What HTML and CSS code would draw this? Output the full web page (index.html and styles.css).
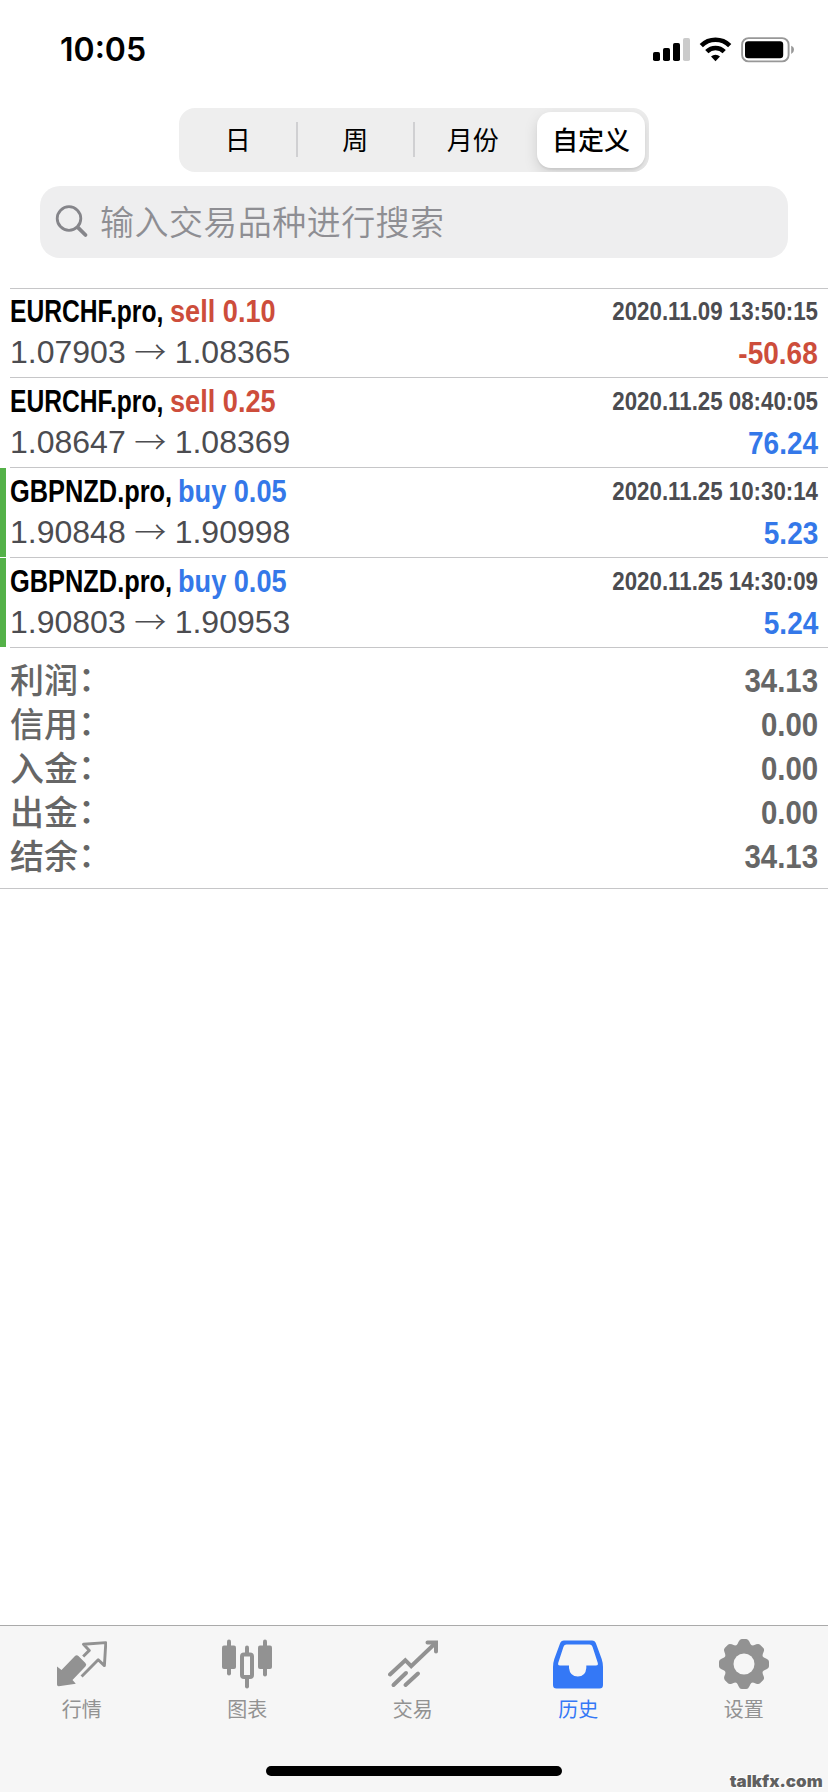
FILE: index.html
```html
<!DOCTYPE html>
<html lang="zh-CN">
<head>
<meta charset="utf-8">
<title>历史</title>
<link rel="stylesheet" href="styles.css">
</head>
<body>
<div class="screen">
  <header class="status">
    <span class="clock">10:05</span>
    <svg class="status-icons" width="142" height="26" viewBox="0 0 142 26">
      <rect x="0" y="15" width="7" height="9" rx="1.8"/>
      <rect x="10" y="11" width="7" height="13" rx="1.8"/>
      <rect x="20" y="6" width="7" height="18" rx="1.8"/>
      <rect x="30" y="1" width="7" height="23" rx="1.8" fill="#cbcbcb"/>
      <g fill="none" stroke="#000" stroke-width="4.6">
        <path d="M48.3 8.6a20.3 20.3 0 0 1 28.4 0"/>
        <path d="M53.8 14.6a12.4 12.4 0 0 1 17.4 0"/>
      </g>
      <path d="M58 19.6a6.500 6.500 0 0 1 9 0L62.500 24.200z"/>
      <rect x="89.100" y="1.100" width="46.500" height="23.300" rx="6.500" fill="none" stroke="#989898" stroke-width="1.900"/>
      <rect x="92" y="4.300" width="38.200" height="17" rx="3.200"/>
      <path d="M138.200 8.700q2.800 1.100 2.800 4.100t-2.800 4.100z" fill="#989898"/>
    </svg>
  </header>

  <nav class="segments">
    <span class="segment">日</span>
    <span class="segment divided">周</span>
    <span class="segment divided">月份</span>
    <span class="segment selected"><span class="pill">自定义</span></span>
  </nav>

  <div class="search">
    <svg width="34" height="34" viewBox="0 0 34 34" fill="none" stroke="#85858a" stroke-linecap="round">
      <circle cx="14" cy="14.500" r="11.800" stroke-width="2.800"/>
      <path d="M22.800 23.300L30.500 31" stroke-width="3.800"/>
    </svg>
    <span class="placeholder">输入交易品种进行搜索</span>
  </div>

  <main class="deals">
    <article class="deal">
      <div class="line top"><span class="symbol eurchf">EURCHF.pro,</span><span class="side sell">sell 0.10</span><time class="time">2020.11.09 13:50:15</time></div>
      <div class="line"><span class="price">1.07903</span><span class="arrow">→</span><span class="price">1.08365</span><span class="profit sell">-50.68</span></div>
    </article>
    <article class="deal">
      <div class="line top"><span class="symbol eurchf">EURCHF.pro,</span><span class="side sell">sell 0.25</span><time class="time">2020.11.25 08:40:05</time></div>
      <div class="line"><span class="price">1.08647</span><span class="arrow">→</span><span class="price">1.08369</span><span class="profit buy">76.24</span></div>
    </article>
    <article class="deal marked">
      <div class="line top"><span class="symbol gbpnzd">GBPNZD.pro,</span><span class="side buy">buy 0.05</span><time class="time">2020.11.25 10:30:14</time></div>
      <div class="line"><span class="price">1.90848</span><span class="arrow">→</span><span class="price">1.90998</span><span class="profit buy">5.23</span></div>
    </article>
    <article class="deal marked">
      <div class="line top"><span class="symbol gbpnzd">GBPNZD.pro,</span><span class="side buy">buy 0.05</span><time class="time">2020.11.25 14:30:09</time></div>
      <div class="line"><span class="price">1.90803</span><span class="arrow">→</span><span class="price">1.90953</span><span class="profit buy">5.24</span></div>
    </article>
  </main>

  <section class="totals">
    <div class="total"><span>利润<span class="colon">：</span></span><span class="amount">34.13</span></div>
    <div class="total"><span>信用<span class="colon">：</span></span><span class="amount">0.00</span></div>
    <div class="total"><span>入金<span class="colon">：</span></span><span class="amount">0.00</span></div>
    <div class="total"><span>出金<span class="colon">：</span></span><span class="amount">0.00</span></div>
    <div class="total"><span>结余<span class="colon">：</span></span><span class="amount">34.13</span></div>
  </section>

  <footer class="tabbar">
    <div class="tabs">
      <div class="tab">
        <svg width="50" height="50" viewBox="0 0 50 50" fill="#929292">
          <path d="M0 27.500L4.500 31 18 17q1.700-1.700 3.400 0l7 7q1.700 1.700 0 3.400L15.500 41l3.300 3.800-17 2.400Q0 47.300 0 45.500z"/>
          <path d="M26.200 17.500L32.300 11.400 26.500 5.300 48.800 3.600 47.400 26.600 41.200 20.700 24.600 37.500" fill="none" stroke="#929292" stroke-width="2.900" stroke-linejoin="round"/>
        </svg>
        <span>行情</span>
      </div>
      <div class="tab">
        <svg width="50" height="50" viewBox="0 0 50 50" fill="#929292">
          <rect x="0" y="6.500" width="14" height="23.500" rx="2"/>
          <rect x="5" y="0.500" width="4" height="36" rx="2"/>
          <rect x="36" y="6.500" width="14" height="23.500" rx="2"/>
          <rect x="41" y="0.500" width="4" height="37" rx="2"/>
          <rect x="20" y="15.500" width="10" height="22.500" rx="2" fill="none" stroke="#929292" stroke-width="4"/>
          <rect x="23" y="6.500" width="4" height="9" rx="2"/>
          <rect x="23" y="38" width="4" height="11.500" rx="2"/>
        </svg>
        <span>图表</span>
      </div>
      <div class="tab">
        <svg width="50" height="50" viewBox="0 0 50 50" fill="none" stroke="#929292" stroke-width="4" stroke-linecap="round">
          <path d="M2 35.500L17.300 21.200 23.200 27.200 47.500 4"/>
          <path d="M39.500 3.500H48V12.500M5.500 46L18 34M17.500 46L30 34.500"/>
        </svg>
        <span>交易</span>
      </div>
      <div class="tab active">
        <svg width="50" height="50" viewBox="0 0 50 50">
          <path fill="#3478f6" fill-rule="evenodd" d="M11 1.500H39Q42 1.500 43 4.500L48.700 20Q50 24 50 28V46Q50 49.500 46.500 49.500H3.500Q0 49.500 0 46V28Q0 24 1.300 20L7 4.500Q8 1.500 11 1.500ZM13.500 5.500Q11.300 5.500 10.500 7.800L5.200 24Q4.600 26.500 7 26.500H16V29Q17 37.500 24.800 37.500T33.300 29V26.500H43Q45.400 26.500 44.800 24L39.500 7.800Q38.700 5.500 36.500 5.500Z"/>
        </svg>
        <span>历史</span>
      </div>
      <div class="tab">
        <svg width="50" height="50" viewBox="-25 -25 50 50" fill="#929292">
          <defs><path id="tooth" d="M-8.200-18Q-6.300-19.500-5.300-22.500-4.200-25-2.300-25H2.300Q4.200-25 5.300-22.500 6.300-19.500 8.200-18L0 0z"/></defs>
          <circle r="19"/>
          <use href="#tooth"/><use href="#tooth" transform="rotate(45)"/><use href="#tooth" transform="rotate(90)"/><use href="#tooth" transform="rotate(135)"/>
          <use href="#tooth" transform="rotate(180)"/><use href="#tooth" transform="rotate(225)"/><use href="#tooth" transform="rotate(270)"/><use href="#tooth" transform="rotate(315)"/>
          <circle r="10.500" fill="#f6f6f6"/>
        </svg>
        <span>设置</span>
      </div>
    </div>
    <div class="home-indicator"></div>
    <span class="watermark">talkfx.com</span>
  </footer>
</div>
</body>
</html>
```

FILE: styles.css
```css
* { box-sizing: border-box; }

body {
  margin: 0;
  background: #fff;
  font-family: "Liberation Sans", "Noto Sans CJK SC", sans-serif;
}

.screen {
  display: flex;
  flex-direction: column;
  width: 828px;
  height: 1792px;
  overflow: hidden;
}

.status {
  display: flex;
  justify-content: space-between;
  height: 108px;
  padding: 30px 33px 0 60px;
}
.clock {
  font: 600 32px/40px Inter, sans-serif;
}
.status-icons { margin-top: 7px; }

.segments {
  display: grid;
  grid-template-columns: repeat(4, 1fr);
  align-self: center;
  width: 470px;
  height: 64px;
  border-radius: 16px;
  background: #eee;
  font: 400 26px/61px "Noto Sans CJK SC", sans-serif;
  text-align: center;
  overflow: hidden;
}
.segment { position: relative; }
.divided::before {
  content: "";
  position: absolute;
  left: -1px;
  top: 14px;
  width: 2px;
  height: 35px;
  background: #d0d0d2;
}
.selected { padding: 4px 4px 4px 5.500px; }
.pill {
  display: block;
  height: 56px;
  border-radius: 14px;
  background: #fff;
  box-shadow: 0 5px 14px rgba(0, 0, 0, .13), 0 2px 2px rgba(0, 0, 0, .06);
  font-weight: 500;
  line-height: 53px;
}

.search {
  display: flex;
  gap: 11px;
  width: 748px;
  height: 72px;
  margin: 14px 40px 30px;
  padding: 18px 15px;
  border-radius: 20px;
  background: #eeeeef;
}
.placeholder {
  font: 350 34px/34px "Noto Sans CJK SC", sans-serif;
  letter-spacing: .45px;
  color: #8e8e93;
  white-space: nowrap;
}

.deals {
  background: linear-gradient(#c6c6c8, #c6c6c8) 10px 0 / 100% 1px no-repeat;
}
.deal {
  position: relative;
  height: 90px;
  padding: 3px 10px 0;
  background: linear-gradient(#c6c6c8, #c6c6c8) 10px 89px / 100% 1px no-repeat;
}
.marked::before {
  content: "";
  position: absolute;
  left: 0;
  top: 0;
  width: 6px;
  height: 89px;
  background: #54b148;
}
.line {
  display: flex;
  height: 41px;
  line-height: 41px;
  font-size: 32px;
  white-space: nowrap;
}
.symbol, .side, .time, .profit, .amount {
  font-weight: 700;
  transform-origin: left center;
}
.symbol { color: #000; }
.eurchf { width: 160px; transform: scaleX(.77); }
.gbpnzd { width: 167.500px; transform: scaleX(.793); }
.side { transform: scaleX(.848); }
.sell { color: #cd4d3b; }
.buy { color: #3478e9; }
.time {
  margin-left: auto;
  font-size: 26px;
  color: #4c4c50;
  transform: scaleX(.857);
  transform-origin: right center;
}
.price { color: #4c4c50; }
.arrow {
  width: 49px;
  font: 300 32px/36px "Noto Sans CJK SC", sans-serif;
  text-align: center;
  color: #4c4c50;
}
.profit {
  margin-left: auto;
  line-height: 42px;
  transform: scaleX(.875);
  transform-origin: right center;
}

.totals {
  height: 241px;
  padding: 9px 10px 0;
  border-bottom: 1px solid #c6c6c8;
  color: #666;
}
.total {
  display: flex;
  justify-content: space-between;
  height: 44px;
  font: 500 34px/44px "Noto Sans CJK SC", sans-serif;
}
.colon {
  position: relative;
  top: -2px;
}
.amount {
  font: 700 34px/46px "Liberation Sans", sans-serif;
  transform: scaleX(.865);
  transform-origin: right center;
}

.tabbar {
  position: relative;
  height: 167px;
  margin-top: auto;
  border-top: 1px solid #aaa;
  background: #f6f6f6;
}
.tabs {
  display: grid;
  grid-template-columns: repeat(5, 165.500px);
  margin-left: -1px;
  padding-top: 13px;
}
.tab {
  display: flex;
  flex-direction: column;
  align-items: center;
  color: #929292;
  font: 400 20px/30px "Noto Sans CJK SC", sans-serif;
}
.tab span { margin-top: 5px; }
.active { color: #3478f6; }
.home-indicator {
  width: 296px;
  height: 10px;
  margin: 42px auto 0;
  border-radius: 5px;
  background: #000;
}
.watermark {
  position: absolute;
  right: 5px;
  bottom: 1px;
  font: 900 16px/20px Inter, sans-serif;
  color: #606060;
  text-shadow: 1px 1px 0 #fff, -1px -1px 0 #fff;
  transform: scaleX(1.06);
  transform-origin: right center;
}
```
